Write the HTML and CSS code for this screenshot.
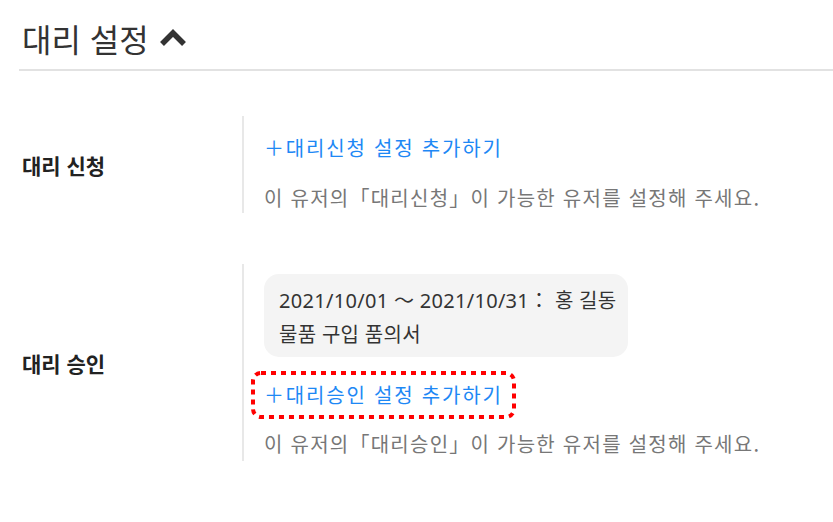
FILE: index.html
```html
<!DOCTYPE html>
<html lang="ko">
<head>
<meta charset="utf-8">
<link rel="stylesheet" href="styles.css">
</head>
<body>
<div class="page">
  <h2 class="title">대리 설정
    <svg class="chevron" width="28" height="20" viewBox="0 0 28 20"><path d="M3 16 L14 5 L25 16" fill="none" stroke="#333" stroke-width="5.5" stroke-linecap="butt" stroke-linejoin="miter"/></svg>
  </h2>
  <div class="divider"></div>

  <section class="row row-apply">
    <div class="label">대리 신청</div>
    <div class="content">
      <div class="add-wrap"><a class="add">＋대리신청 설정 추가하기</a></div>
      <p class="desc">이 유저의「대리신청」이 가능한 유저를 설정해 주세요.</p>
    </div>
  </section>

  <section class="row row-approve">
    <div class="label">대리 승인</div>
    <div class="content">
      <div class="card">
        <div class="card-line">2021/10/01 ～ 2021/10/31： 홍 길동</div>
        <div class="card-line">물품 구입 품의서</div>
      </div>
      <div class="add-wrap marked">
        <a class="add">＋대리승인 설정 추가하기</a>
        <svg class="mark" aria-hidden="true"><rect class="mark-rect" x="2" y="2" rx="8" ry="8"/></svg>
      </div>
      <p class="desc">이 유저의「대리승인」이 가능한 유저를 설정해 주세요.</p>
    </div>
  </section>
</div>
</body>
</html>
```

FILE: styles.css
```css
html, body {
  margin: 0;
  padding: 0;
  background: #fff;
}

body {
  font-family: "Noto Sans", "Noto Sans CJK KR", sans-serif;
  color: #333;
}

.page {
  padding-left: 19px;
  width: 814px;
  overflow: hidden;
}

.title {
  margin: 0;
  padding: 14px 0 0 3px;
  height: 48px;
  font-size: 32px;
  line-height: 48px;
  font-weight: 400;
  color: #333;
  display: flex;
  align-items: center;
  gap: 10px;
  font-family: "Noto Sans CJK KR", sans-serif;
}

.chevron {
  display: block;
}

.divider {
  margin-top: 7px;
  height: 2px;
  background: #e2e2e2;
}

.row {
  display: flex;
  align-items: center;
}

.row-apply {
  margin-top: 45px;
}

.row-approve {
  margin-top: 51px;
}

.label {
  width: 223px;
  padding-left: 3px;
  box-sizing: border-box;
  font-size: 21px;
  font-weight: 700;
  color: #222;
  font-family: "Noto Sans CJK KR", sans-serif;
}

.content {
  border-left: 2px solid #e8e8e8;
  padding-left: 20px;
  flex: 1;
}

.row-apply .content {
  padding-top: 19px;
  padding-bottom: 2px;
}

.row-approve .content {
  padding-top: 10px;
  padding-bottom: 4px;
}

.add-wrap {
  display: flex;
}

.add {
  font-family: "Noto Sans CJK KR", sans-serif;
  font-size: 20px;
  line-height: 26px;
  letter-spacing: 1.8px;
  color: #1e88f5;
  cursor: pointer;
}

.desc {
  margin: 24px 0 0;
  font-family: "Noto Sans CJK KR", sans-serif;
  font-size: 20px;
  line-height: 26px;
  letter-spacing: 1.25px;
  color: #777;
}

.card {
  width: 364px;
  box-sizing: border-box;
  background: #f4f4f4;
  border-radius: 15px;
  padding: 12px 8px 7px 15px;
  display: flex;
  flex-direction: column;
  gap: 4px;
}

.card-line {
  font-size: 20px;
  line-height: 30px;
  letter-spacing: 0.3px;
  white-space: nowrap;
  color: #333;
}

.marked {
  position: relative;
  align-self: flex-start;
  width: 265px;
  margin-left: -13px;
  margin-top: 14px;
  padding: 11px 0 11px 13px;
  box-sizing: border-box;
}

.mark {
  position: absolute;
  left: 0;
  top: 0;
  width: 100%;
  height: 100%;
  overflow: visible;
}

.mark-rect {
  width: calc(100% - 4px);
  height: calc(100% - 4px);
  fill: none;
  stroke: #f00;
  stroke-width: 4;
  stroke-dasharray: 5 5;
}

.row-approve .desc {
  margin-top: 12px;
}
```
